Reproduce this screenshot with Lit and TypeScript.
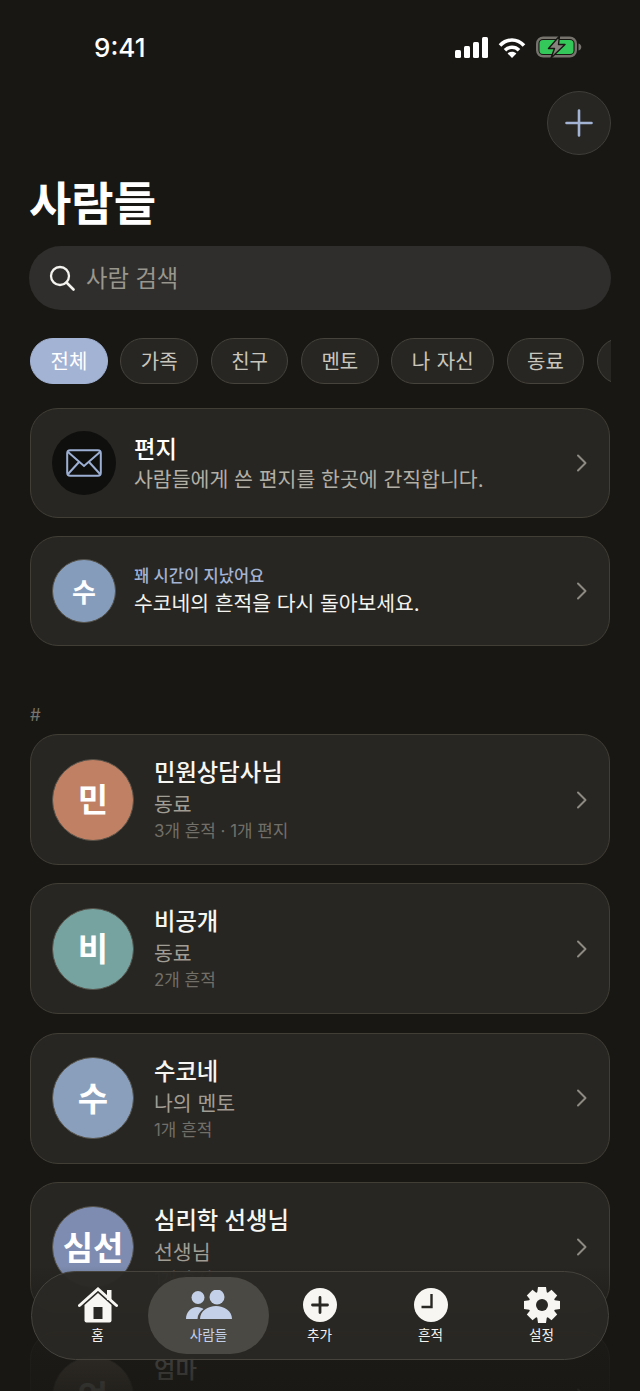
import { LitElement, html, css } from "lit";
import { customElement } from "lit/decorators.js";

const chevron = html`<svg class="chev" width="12" height="20" viewBox="0 0 12 20"><path d="M2 2.500 9.500 10 2 17.500" fill="none" stroke="#8d8a82" stroke-width="2" stroke-linecap="round" stroke-linejoin="round"/></svg>`;

const people = [
  { i: "민", c: "#c08063", n: "민원상담사님", r: "동료", m: "3개 흔적 · 1개 편지" },
  { i: "비", c: "#76a3a0", n: "비공개", r: "동료", m: "2개 흔적" },
  { i: "수", c: "#8a9fbc", n: "수코네", r: "나의 멘토", m: "1개 흔적" },
  { i: "심선", c: "#7d8cb0", n: "심리학 선생님", r: "선생님", m: "1개 흔적" },
  { i: "엄", c: "#8d7f70", n: "엄마", r: "가족", m: "1개 흔적" },
];

@customElement("app-root")
export class AppRoot extends LitElement {
  static styles = css`
    :host { display: block; width: 640px; height: 1391px; overflow: hidden; position: relative; background: #181714; color: #fff;
      font-family: "Inter", "Noto Sans CJK KR", sans-serif; }
    .status { height: 91px; display: flex; justify-content: space-between; align-items: flex-start; padding: 33px 58px 0 94px; box-sizing: border-box; }
    .time { font-size: 26px; line-height: 30px; font-weight: 500; color: #fff; }
    .sicons { display: flex; align-items: center; gap: 10px; padding-top: 3px; }
    .main { padding: 0 30px; }
    .top { display: flex; justify-content: flex-end; }
    .plus { width: 64px; height: 64px; box-sizing: border-box; border-radius: 50%; background: #272622; border: 1.5px solid #3f3e39; display: flex; align-items: center; justify-content: center; margin-right: -1px; }
    h1 { margin: 19px 0 0 -1px; font-size: 46px; line-height: 58px; font-weight: 700; color: #fff; }
    .search { margin: 14px -1px 0 -1px; height: 64px; border-radius: 32px; background: #2f2e2c; display: flex; align-items: center; padding-left: 20px; gap: 11px; font-size: 23.3px; color: #99968e; }
    .search span { padding-bottom: 2px; }
    .chips { margin-top: 28px; display: flex; gap: 12.5px; overflow: hidden; height: 46px; margin-right: -1px; }
    .chip { flex: none; height: 46px; box-sizing: border-box; padding: 0 19.5px 1px; border-radius: 23px; background: #282622; border: 1.5px solid #45433b; color: #c9c6bd; font-size: 20px; word-spacing: 1px; display: flex; align-items: center; }
    .chip.on { background: #a3b3d4; border-color: #a3b3d4; color: #fff; }
    .chip.more { width: 78px; }
    .card { display: flex; align-items: center; box-sizing: border-box; background: #282622; border: 1.5px solid #413e35; border-radius: 28px; padding: 0 21px; }
    .chev { flex: none; margin-left: auto; }
    .feat { height: 110px; margin-top: 24px; gap: 18px; }
    .feat + .feat { margin-top: 18px; }
    .feat .av { width: 64px; height: 64px; flex: none; border-radius: 50%; display: flex; align-items: center; justify-content: center; box-sizing: border-box; }
    .av.dark { background: #0f0f0e; }
    .av.blue { background: #859cbb; border: 1.5px solid #55524a; font-size: 26px; font-weight: 600; padding-bottom: 2px; }
    .tx { padding-top: 2px; }
    .ft { font-size: 23.3px; line-height: 29px; font-weight: 500; color: #fff; }
    .fs { font-size: 20.5px; line-height: 29px; color: #b2afa6; margin-top: 1px; }
    .fk { font-size: 16.5px; line-height: 22px; font-weight: 500; color: #a3b3d4; }
    .fw { font-size: 20.4px; line-height: 30px; color: #f4f3ef; margin-top: 2px; }
    .sec { margin-top: 60px; height: 28px; font-size: 17px; line-height: 18px; color: #76746c; }
    .list { display: flex; flex-direction: column; gap: 18.3px; }
    .person { height: 131px; flex: none; gap: 20px; }
    .pav { width: 82px; height: 82px; flex: none; box-sizing: border-box; border-radius: 50%; border: 1.5px solid #55524a; display: flex; align-items: center; justify-content: center; font-size: 33px; font-weight: 600; color: #fff; padding-bottom: 3px; }
    .ptx { padding-top: 2px; }
    .pn { font-size: 23.3px; line-height: 32px; font-weight: 500; color: #f7f6f2; }
    .pr { font-size: 20.5px; line-height: 32px; color: #a09d95; }
    .pm { font-size: 16.9px; line-height: 25px; color: #716f68; margin-top: -2px; }
    .fade { position: absolute; left: 0; right: 0; bottom: 0; height: 125px; background: linear-gradient(to bottom, rgba(24,23,20,0), rgba(24,23,20,.8) 62%, rgba(24,23,20,.9)); }
    nav { position: absolute; left: 31px; top: 1270.5px; width: 578px; height: 89px; box-sizing: border-box; border-radius: 44.5px; background: rgba(42,40,36,.97); border: 1.5px solid #45433c; display: grid; grid-template-columns: repeat(5, 111px); align-items: center; padding-left: 10px; }
    .tab { height: 77px; display: flex; flex-direction: column; align-items: center; font-size: 13.6px; line-height: 18px; color: #f4f3ef; font-weight: 400; }
    .ic { height: 36px; margin: 10px 0 3px; display: flex; align-items: center; justify-content: center; }
    .tab.on { margin: 0 -5px; background: #4b4943; border-radius: 38.5px; color: #c3d0e8; }
  `;

  render() {
    return html`
      <div class="status">
        <div class="time">9:41</div>
        <div class="sicons">
          <svg width="33" height="21" viewBox="0 0 33 21"><g fill="#fff"><rect x="0" y="13" width="6" height="8" rx="1.500"/><rect x="9" y="9" width="6" height="12" rx="1.500"/><rect x="18" y="5" width="6" height="16" rx="1.500"/><rect x="27" y="0" width="6" height="21" rx="1.500"/></g></svg>
          <svg width="28" height="21" viewBox="0 0 28 21"><g fill="none" stroke="#fff" stroke-width="3.600"><path d="M2 8.500C9 1.200 19 1.200 26 8.500"/><path d="M7 13.200C11 9.300 17 9.300 21 13.200"/></g><path d="M14 21 9.600 16.400C12 14.300 16 14.300 18.400 16.400Z" fill="#fff"/></svg>
          <svg width="46" height="22" viewBox="0 0 46 22"><rect x="1.200" y="1.700" width="38.600" height="18.600" rx="6" fill="none" stroke="#75736c" stroke-width="2.400"/><rect x="3.500" y="4" width="34" height="14" rx="3.500" fill="#34c759"/><path d="M42.500 7.500c2 .5 2.800 2 2.800 3.500s-.8 3-2.800 3.500Z" fill="#75736c"/><path d="M23.500 0 12.500 12.500h6L15 22 29 8.500h-6.500Z" fill="#85837b" stroke="#181714" stroke-width="1.400" stroke-linejoin="round"/></svg>
        </div>
      </div>
      <div class="main">
        <div class="top"><div class="plus"><svg width="28" height="28" viewBox="0 0 28 28"><path d="M14 1.500v25M1.500 14h25" stroke="#a3b3d4" stroke-width="2.600" stroke-linecap="round"/></svg></div></div>
        <h1>사람들</h1>
        <div class="search">
          <svg width="26" height="26" viewBox="0 0 26 26"><circle cx="11" cy="11" r="9" fill="none" stroke="#f4f3ef" stroke-width="2.300"/><path d="M17.500 17.500 24.500 24.500" stroke="#f4f3ef" stroke-width="2.600" stroke-linecap="round"/></svg>
          <span>사람 검색</span>
        </div>
        <div class="chips">
          ${["전체", "가족", "친구", "멘토", "나 자신", "동료"].map((c, i) => html`<div class="chip ${i === 0 ? "on" : ""}">${c}</div>`)}
          <div class="chip more"></div>
        </div>
        <div class="card feat">
          <div class="av dark"><svg width="36" height="28" viewBox="0 0 36 28"><rect x="1.200" y="1.200" width="33.600" height="25.600" rx="3" fill="none" stroke="#9db0d4" stroke-width="2"/><path d="M2 3 18 17 34 3M2 25 13 13M34 25 23 13" fill="none" stroke="#9db0d4" stroke-width="2"/></svg></div>
          <div class="tx"><div class="ft">편지</div><div class="fs">사람들에게 쓴 편지를 한곳에 간직합니다.</div></div>
          ${chevron}
        </div>
        <div class="card feat">
          <div class="av blue">수</div>
          <div class="tx"><div class="fk">꽤 시간이 지났어요</div><div class="fw">수코네의 흔적을 다시 돌아보세요.</div></div>
          ${chevron}
        </div>
        <div class="sec">#</div>
        <div class="list">
          ${people.map((p) => html`<div class="card person">
            <div class="pav" style="background:${p.c}">${p.i}</div>
            <div class="ptx"><div class="pn">${p.n}</div><div class="pr">${p.r}</div><div class="pm">${p.m}</div></div>
            ${chevron}
          </div>`)}
        </div>
      </div>
      <div class="fade"></div>
      <nav>
        <div class="tab">
          <div class="ic"><svg width="40" height="36" viewBox="0 0 40 36"><rect x="29" y="3" width="4.500" height="10" fill="#f7f6f2"/><path d="M6.500 18 20 6l13.500 12v15.500a2 2 0 0 1-2 2h-23a2 2 0 0 1-2-2Z" fill="#f7f6f2"/><rect x="15.500" y="20" width="9" height="12" fill="#2a2824"/><path d="M1.500 18.500 20 2l18.500 16.500" fill="none" stroke="#f7f6f2" stroke-width="3" stroke-linecap="round"/></svg></div>
          <span>홈</span>
        </div>
        <div class="tab on">
          <div class="ic"><svg width="46" height="29" viewBox="0 0 46 29"><g fill="#c3d0e8"><circle cx="12" cy="7.500" r="6.500"/><circle cx="31" cy="7" r="7.500"/><path d="M0 29c0-7 5-12 11-12 3 0 5 1 6.500 2-3.500 2.500-6 6-6 10Z"/><path d="M14 29c0-8 8-13 16-13s16 5 16 13Z"/></g></svg></div>
          <span>사람들</span>
        </div>
        <div class="tab">
          <div class="ic"><svg width="34" height="34" viewBox="0 0 34 34"><circle cx="17" cy="17" r="17" fill="#f7f6f2"/><path d="M17 9.500v15M9.500 17h15" stroke="#2a2824" stroke-width="2.800" stroke-linecap="round"/></svg></div>
          <span>추가</span>
        </div>
        <div class="tab">
          <div class="ic"><svg width="34" height="34" viewBox="0 0 34 34"><circle cx="17" cy="17" r="17" fill="#f7f6f2"/><path d="M17.500 6v13H7.500" fill="none" stroke="#2a2824" stroke-width="2.400"/></svg></div>
          <span>흔적</span>
        </div>
        <div class="tab">
          <div class="ic"><svg width="36" height="36" viewBox="0 0 36 36"><circle cx="18" cy="18" r="13.500" fill="#f7f6f2"/><path fill="#f7f6f2" d="M14 0h8l1 7H13ZM14 36h8l1-7H13ZM0 14v8l7 1V13ZM36 14v8l-7 1V13ZM2.800 8.500 8.500 2.800l5.500 4.500-6.700 6.700ZM33.200 8.500 27.500 2.800 22 7.300l6.700 6.700ZM2.800 27.500l5.700 5.700 5.500-4.500-6.700-6.700ZM33.200 27.500l-5.700 5.700-5.500-4.500 6.700-6.700Z"/><circle cx="18" cy="18" r="6" fill="#2a2824"/></svg></div>
          <span>설정</span>
        </div>
      </nav>
    `;
  }
}
